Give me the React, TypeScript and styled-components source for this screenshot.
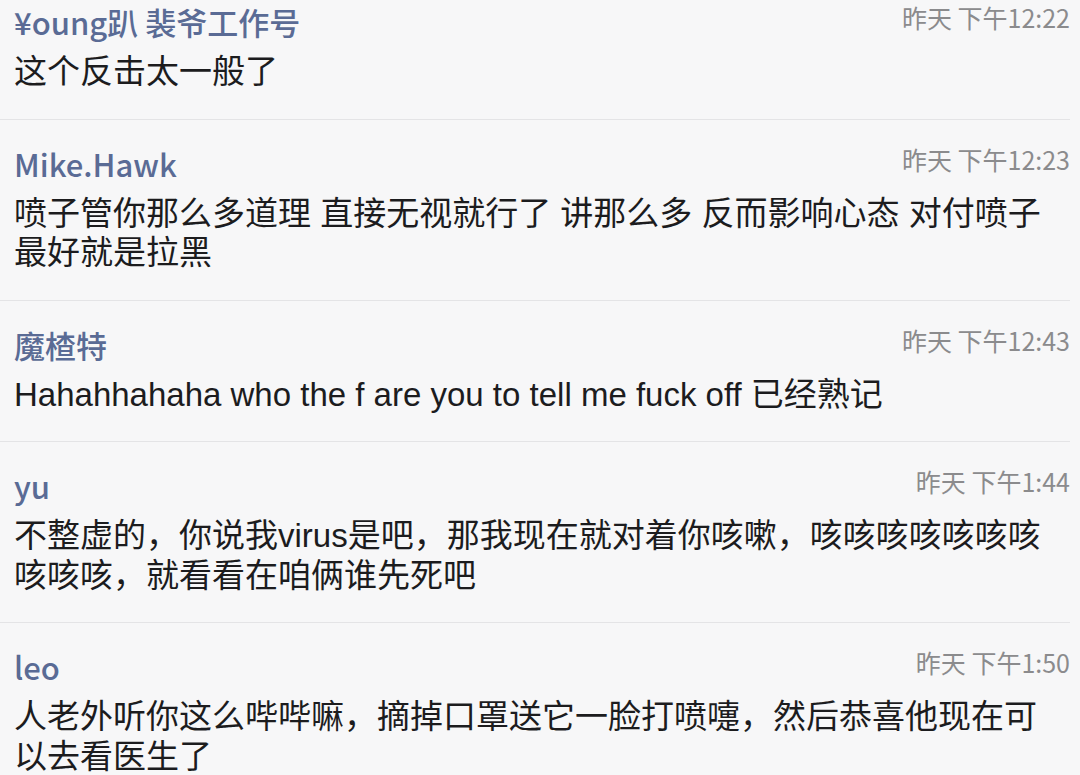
import React from "react";
import styled, { createGlobalStyle } from "styled-components";

const GlobalStyle = createGlobalStyle`
  html, body {
    margin: 0;
    padding: 0;
    background: #f7f7f8;
    overflow: hidden;
  }
  body {
    font-family: "Noto Sans CJK SC", "Noto Sans", sans-serif;
  }
`;

type Comment = {
  name: string;
  time: string;
  lines: string[];
};

const COMMENTS: Comment[] = [
  {
    name: "¥oung趴 裴爷工作号",
    time: "昨天 下午12:22",
    lines: ["这个反击太一般了"],
  },
  {
    name: "Mike.Hawk",
    time: "昨天 下午12:23",
    lines: [
      "喷子管你那么多道理 直接无视就行了 讲那么多 反而影响心态 对付喷子",
      "最好就是拉黑",
    ],
  },
  {
    name: "魔楂特",
    time: "昨天 下午12:43",
    lines: ["Hahahhahaha who the f are you to tell me fuck off 已经熟记"],
  },
  {
    name: "yu",
    time: "昨天 下午1:44",
    lines: [
      "不整虚的，你说我virus是吧，那我现在就对着你咳嗽，咳咳咳咳咳咳咳",
      "咳咳咳，就看看在咱俩谁先死吧",
    ],
  },
  {
    name: "leo",
    time: "昨天 下午1:50",
    lines: [
      "人老外听你这么哔哔嘛，摘掉口罩送它一脸打喷嚏，然后恭喜他现在可",
      "以去看医生了",
    ],
  },
];

// list is scrolled a little, first item is cut at the top
const List = styled.div`
  margin-top: -22px;
  display: flex;
  flex-direction: column;
`;

const Item = styled.div`
  margin-right: 10px;
  padding: 22px 0 27px 14px;
  border-bottom: 1px solid #e4e4e6;
`;

const Header = styled.div`
  display: flex;
  align-items: flex-start;
  justify-content: space-between;
  height: 44px;
`;

const Name = styled.span`
  font-size: 31px;
  line-height: 44px;
  font-weight: 500;
  color: #5a6b95;
`;

const Time = styled.span`
  font-size: 25px;
  line-height: 34px;
  color: #8b8b8d;
  white-space: nowrap;
`;

const Body = styled.div`
  margin-top: 8px;
  display: flex;
  flex-direction: column;
`;

const Line = styled.span`
  font-family: "Liberation Sans", "Noto Sans CJK SC", sans-serif;
  font-size: 33px;
  line-height: 39.5px;
  color: #1c1c1e;
  white-space: nowrap;
`;

export default function App() {
  return (
    <>
      <GlobalStyle />
      <List>
        {COMMENTS.map((c) => (
          <Item key={c.name}>
            <Header>
              <Name>{c.name}</Name>
              <Time>{c.time}</Time>
            </Header>
            <Body>
              {c.lines.map((l) => (
                <Line key={l}>{l}</Line>
              ))}
            </Body>
          </Item>
        ))}
      </List>
    </>
  );
}
